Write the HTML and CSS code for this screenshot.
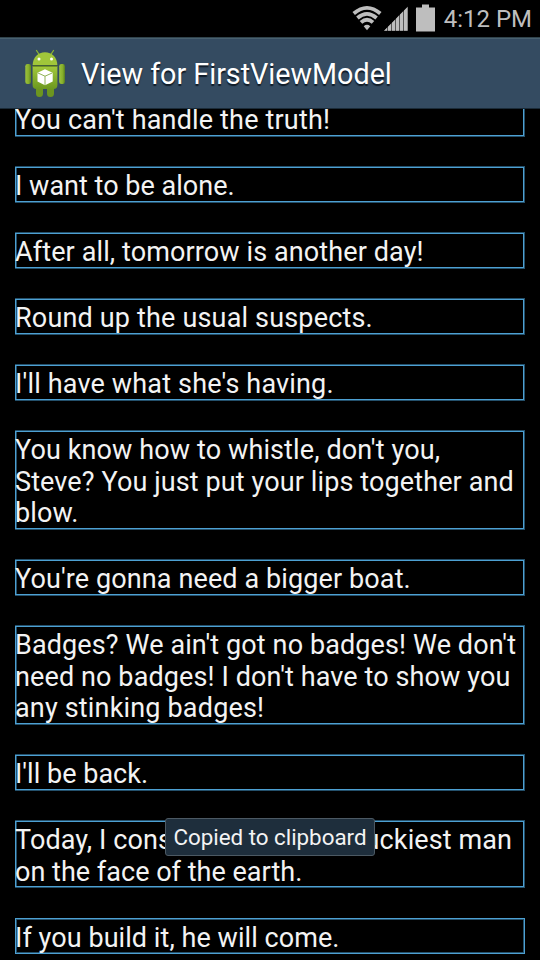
FILE: index.html
```html
<!DOCTYPE html>
<html lang="en">
<head>
<meta charset="utf-8">
<title>View for FirstViewModel</title>
<link rel="stylesheet" href="styles.css">
</head>
<body>
<div class="screen">
  <div class="status">
    <svg class="indicators" width="84" height="37" viewBox="352 0 84 37">
      <g fill="none" stroke="#bebebe" stroke-width="3.8">
        <path d="M353.7 13.5Q367 2.2 380.3 13.5"/>
        <path d="M357.4 18Q367 9.8 376.6 18"/>
        <path d="M361 22.3Q367 17 373 22.3"/>
      </g>
      <path d="M363.7 26.2Q367 23.3 370.3 26.2L367 30.2Z" fill="#bebebe"/>
      <path d="M384 30.8 408 6.5V30.8Z" fill="#555"/>
      <path d="M384 30.8 387 27.8V30.8ZM388 26.7 391 23.7V30.8H388ZM392 22.7 395 19.7V30.8H392ZM396 18.7 399 15.6V30.8H396ZM400 14.6 403 11.6V30.8H400ZM404 10.6 407.5 7V30.8H404Z" fill="#bebebe"/>
      <path d="M416 7.5H422V4.5H429V7.5H435V31.5H416Z" fill="#bebebe"/>
    </svg>
    <span class="clock">4:12 PM</span>
  </div>
  <header class="bar">
    <svg class="robot" width="60" height="60" viewBox="0 0 60 60">
      <defs>
        <linearGradient id="g" x1="0" y1="0" x2="0" y2="1"><stop offset="0" stop-color="#a3c93c"/><stop offset="1" stop-color="#6c981f"/></linearGradient>
        <linearGradient id="h" x1="0" y1="0" x2="1" y2="0"><stop offset="0" stop-color="#9dc43b"/><stop offset=".6" stop-color="#86ae2b"/><stop offset="1" stop-color="#5c851b"/></linearGradient>
      </defs>
      <path d="M21.5 8.5 24.5 13M38.5 8.5 35.5 13" stroke="#8cb52f" stroke-width="1.3" stroke-linecap="round"/>
      <path d="M21 44H28V51.5Q28 55 24.5 55T21 51.5ZM32 44H39V51.5Q39 55 35.5 55T32 51.5Z" fill="#6d961f"/>
      <rect x="10.3" y="22" width="5.7" height="20" rx="2.2" fill="url(#h)"/>
      <rect x="44.2" y="22" width="5.7" height="20" rx="2.2" fill="url(#h)"/>
      <path d="M17.6 24H42.4V43Q42.4 47 38.5 47H21.5Q17.6 47 17.6 43Z" fill="url(#g)"/>
      <path d="M17.6 23C18 15 23 10.2 30 10.2S42 15 42.4 23Z" fill="#a0c63a"/>
      <path d="M17.6 24H42.4" stroke="#506f1c" stroke-width="1.2"/>
      <circle cx="24" cy="17" r="1.5" fill="#fff"/><circle cx="36.5" cy="17" r="1.5" fill="#fff"/>
      <path d="M30 27.2 37.7 30.8V39.5L30 43.3 22.5 39.5V30.8Z" fill="#fff"/>
      <path d="M22.8 30.9 30 34.2 37.4 30.9M30 34.2V43" fill="none" stroke="#83a943" stroke-width=".9"/>
    </svg>
    <h1 class="title">View for FirstViewModel</h1>
  </header>
  <main class="list">
    <p class="row wide">You can't handle the truth!</p>
    <p class="row tight">I want to be alone.</p>
    <p class="row">After all, tomorrow is another day!</p>
    <p class="row wide">Round up the usual suspects.</p>
    <p class="row wide">I'll have what she's having.</p>
    <p class="row">You know how to whistle, don't you,<br>Steve? You just put your lips together and<br>blow.</p>
    <p class="row">You're gonna need a bigger boat.</p>
    <p class="row">Badges? We ain't got no badges! We don't<br>need no badges! I don't have to show you<br><span class="wide">any stinking badges!</span></p>
    <p class="row tight">I'll be back.</p>
    <p class="row">Today, I consider myself the luckiest man<br><span class="tight">on the face of the earth.</span></p>
    <p class="row inner">If you build it, he will come.</p>
  </main>
  <div class="toast">Copied to clipboard</div>
</div>
</body>
</html>
```
FILE: styles.css
```css
* { box-sizing: border-box; }
body { margin: 0; background: #000; }
.screen {
  position: relative;
  display: flex;
  flex-direction: column;
  width: 540px;
  height: 960px;
  overflow: hidden;
  background: #000;
  color: #f3f3f3;
  font-family: Roboto, "Liberation Sans", sans-serif;
}
.status {
  display: flex;
  flex: 0 0 37px;
  justify-content: flex-end;
  padding-right: 8px;
  color: #bebebe;
}
.indicators { flex: none; margin-right: 8px; }
.clock { font-size: 24px; line-height: 38px; height: 37px; white-space: nowrap; }
.bar {
  display: flex;
  flex: 0 0 72px;
  align-items: center;
  padding-left: 15px;
  background: #344b61;
  border-top: 1px solid #30434c;
  border-bottom: 1px solid #1b2b38;
  box-shadow: inset 0 1px #48606f;
}
.robot { flex: none; margin-top: -2px; }
.title {
  margin: 1px 0 0 6px;
  color: #fff;
  font-size: 28.7px;
  font-weight: 400;
  line-height: 32px;
  white-space: nowrap;
  text-shadow: 0 1.5px 1px #101c28;
}
.list {
  display: flex;
  flex: 1;
  flex-direction: column;
  gap: 29.3px;
  overflow: hidden;
  padding: 0 15px;
}
.row {
  flex: none;
  margin: 0;
  padding: 5px 0 .2px;
  font-size: 27px;
  letter-spacing: .11px;
  line-height: 31.5px;
  white-space: nowrap;
  box-shadow: inset 0 1px #24506b, inset 0 -1px #24506b, inset 1px 0 #4da0d2, inset -1px 0 #24506b, inset 0 2px #4da0d2, inset 0 -2px #4da0d2, inset 2px 0 #24506b, inset -2px 0 #4da0d2;
}
.row:first-child { margin-top: -8.7px; }
.wide { letter-spacing: .17px; }
.tight { letter-spacing: .02px; }
.inner { letter-spacing: .06px; box-shadow: inset 0 0 0 1px #4da0d2, inset 0 0 0 2px #24506b; }
.toast {
  position: absolute;
  left: 165px;
  top: 818px;
  width: 210px;
  height: 38px;
  border: 1px solid #4c5963;
  border-radius: 3px;
  background: #1e2e3c;
  font-size: 22.4px;
  letter-spacing: -.03px;
  line-height: 37px;
  text-align: center;
  white-space: nowrap;
}
```
